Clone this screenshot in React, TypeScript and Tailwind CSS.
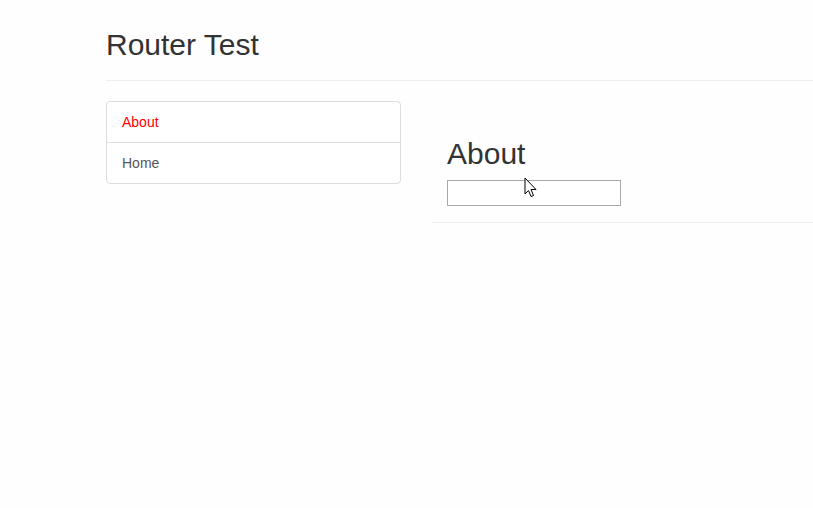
import React from 'react'

const font = { fontFamily: '"Liberation Sans", Arial, sans-serif' }

function Cursor() {
  return (
    <svg
      className="absolute left-[524px] top-[177px] pointer-events-none"
      width="13"
      height="21"
      viewBox="0 0 13 21"
    >
      <path
        d="M1 1 L1 17 L4.5 13.5 L7 19.5 L9.5 18.5 L7 12.5 L12 12.5 Z"
        fill="#fff"
        stroke="#000"
        strokeWidth="1"
        strokeLinejoin="miter"
      />
    </svg>
  )
}

export default function App() {
  return (
    <div className="relative min-h-[508px] bg-[#fefefe] text-[14px] text-[#333]" style={font}>
      <div className="ml-[106px]">
        {/* Header */}
        <div className="pt-[28px] pb-[9px] mb-[20px] border-b border-[#eee]">
          <h1 className="text-[30px] leading-[33px] mb-[10px]">Router Test</h1>
        </div>

        <div className="flex">
          {/* Nav list */}
          <div className="w-[295px] shrink-0">
            <div className="border border-[#ddd] rounded-[4px] bg-white">
              <a className="block px-[15px] py-[10px] leading-[20px] text-[#ff0000] border-b border-[#ddd] cursor-pointer">
                About
              </a>
              <a className="block px-[15px] py-[10px] leading-[20px] text-[#555] cursor-pointer">
                Home
              </a>
            </div>
          </div>

          {/* Content */}
          <div className="flex-1 ml-[31px]">
            <div className="pl-[15px] pt-[36px] pb-[16px] border-b border-[#eee]">
              <h2 className="text-[30px] leading-[33px] mb-[10px]">About</h2>
              <input
                type="text"
                className="block w-[174px] h-[26px] border border-[#a9a9a9] bg-white outline-none px-1"
              />
            </div>
          </div>
        </div>
      </div>
      <Cursor />
    </div>
  )
}
